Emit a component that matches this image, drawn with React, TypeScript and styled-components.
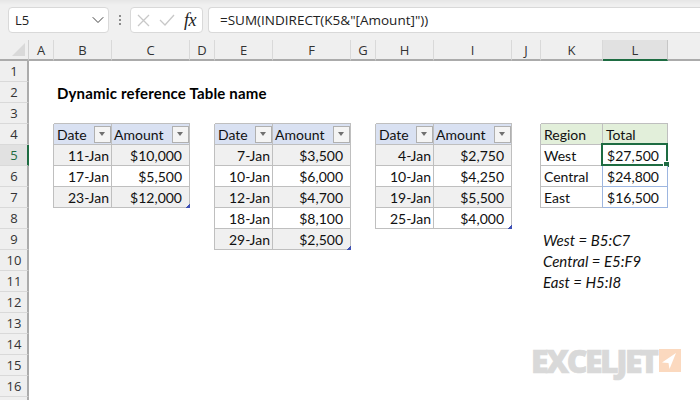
import React from "react";
import styled, { createGlobalStyle } from "styled-components";
import { ChevronDown } from "lucide-react";

const GlobalStyle = createGlobalStyle`
  html, body {
    margin: 0;
    padding: 0;
    background: #fff;
  }
  body {
    width: 700px;
    height: 400px;
    overflow: hidden;
  }
`;

const Page = styled.div`
  width: 700px;
  height: 400px;
  display: flex;
  flex-direction: column;
  overflow: hidden;
  font-family: "Lato", "Liberation Sans", sans-serif;
`;

const Toolbar = styled.div`
  height: 40px;
  box-sizing: border-box;
  flex: none;
  display: flex;
  align-items: center;
  padding: 7px 0 7px 8px;
  background: linear-gradient(#e6e6e6 0, #f0f0f0 5px, #f0f0f0 100%);
  font-family: "Open Sans", "Noto Sans", sans-serif;
`;

const NameBox = styled.div`
  width: 101px;
  height: 26px;
  box-sizing: border-box;
  display: flex;
  align-items: center;
  justify-content: space-between;
  padding: 0 0 0 6px;
  background: #fff;
  border: 1px solid #d9d9d9;
  border-radius: 4px;
  font-size: 13px;
  color: #222;
`;

const Dots = styled.div`
  width: 21px;
  display: flex;
  flex-direction: column;
  align-items: center;
  gap: 2px;

  i {
    width: 2px;
    height: 2px;
    background: #8c8c8c;
  }
`;

const FormulaButtons = styled.div`
  width: 73px;
  height: 26px;
  box-sizing: border-box;
  display: flex;
  align-items: center;
  gap: 9px;
  padding: 0 2px 0 6px;
  background: #fff;
  border: 1px solid #d9d9d9;
  border-radius: 4px;
  margin-right: 5px;

  svg {
    flex: none;
  }
`;

const Fx = styled.span`
  font-family: "Liberation Serif", serif;
  font-style: italic;
  font-size: 18px;
  font-weight: 500;
  color: #222;
  letter-spacing: -0.5px;
`;

const FormulaBar = styled.div`
  flex: 1;
  height: 26px;
  box-sizing: border-box;
  display: flex;
  align-items: center;
  padding: 0 0 0 11px;
  background: #fff;
  border: 1px solid #d9d9d9;
  border-right: none;
  border-radius: 4px 0 0 4px;
  font-size: 13.5px;
  color: #222;
  white-space: nowrap;
`;

const Sheet = styled.div`
  flex: 1;
  display: grid;
  grid-template-columns: 29px 25px 58px 78px 25px 58px 78px 25px 58px 78px 29px 62px 65px 32px;
  grid-template-rows: repeat(18, 21px);
  background: #fff;
`;

const Corner = styled.div`
  grid-column: 1;
  grid-row: 1;
  position: relative;
  background: #efefef;
  border-right: 1px solid #d0d0d0;
  border-bottom: 2px solid #ababab;

  &::after {
    content: "";
    position: absolute;
    right: 3px;
    bottom: 3px;
    border-style: solid;
    border-width: 0 0 13px 13px;
    border-color: transparent transparent #d9d9d9 transparent;
  }
`;

const ColHead = styled.div<{ $col: number; $active?: boolean }>`
  grid-column: ${(p) => p.$col};
  grid-row: 1;
  display: flex;
  align-items: center;
  justify-content: center;
  background: ${(p) => (p.$active ? "#e1e1e1" : "#efefef")};
  border-right: 1px solid ${(p) => (p.$active ? "#c6c6c6" : "#d9d9d9")};
  border-bottom: 2px solid ${(p) => (p.$active ? "#1e6c42" : "#ababab")};
  font-family: "Open Sans", "Noto Sans", sans-serif;
  font-size: 13px;
  color: #333;
`;

const ColFill = styled.div`
  grid-column: 14;
  grid-row: 1;
  background: #efefef;
  border-bottom: 2px solid #ababab;
`;

const RowHead = styled.div<{ $row: number; $active?: boolean }>`
  grid-column: 1;
  grid-row: ${(p) => p.$row};
  box-sizing: border-box;
  display: flex;
  align-items: center;
  justify-content: center;
  padding-left: 1px;
  background: ${(p) => (p.$active ? "#e1e1e1" : "#efefef")};
  border-right: 2px solid ${(p) => (p.$active ? "#1e6c42" : "#ababab")};
  border-bottom: 1px solid #d9d9d9;
  font-family: "Open Sans", "Noto Sans", sans-serif;
  font-size: 13px;
  color: ${(p) => (p.$active ? "#1e6c42" : "#333")};
`;

const Title = styled.div`
  grid-column: 3 / 9;
  grid-row: 3;
  align-self: center;
  padding-left: 3px;
  font-size: 15px;
  font-weight: 700;
  letter-spacing: 0.18px;
  color: #000;
  white-space: nowrap;
`;

type CellKind = "head" | "band" | "plain" | "greenHead";

const cellBackground: Record<CellKind, string> = {
  head: "#d9e1f2",
  band: "#f0f0f0",
  plain: "#fff",
  greenHead: "#e2efda",
};

const Cell = styled.div<{
  $col: number;
  $row: number;
  $kind: CellKind;
  $pad?: number;
  $blue?: boolean;
  $blueRight?: boolean;
}>`
  grid-column: ${(p) => p.$col};
  grid-row: ${(p) => p.$row};
  position: relative;
  box-sizing: border-box;
  display: flex;
  align-items: center;
  justify-content: ${(p) => (p.$pad ? "flex-end" : "flex-start")};
  padding: 0 ${(p) => p.$pad ?? 3}px 0 3px;
  background: ${(p) => cellBackground[p.$kind]};
  border-right: 1px solid ${(p) => (p.$blue || p.$blueRight ? "#9db6e0" : "#bfbfbf")};
  border-bottom: 1px solid ${(p) => (p.$blue ? "#9db6e0" : "#bfbfbf")};
  font-size: 14px;
  color: #111;
  white-space: nowrap;
`;

const AmountLabel = styled.span`
  margin-left: -1px;
`;

const LeftEdge = styled.div<{ $col: number; $from: number; $to: number }>`
  grid-column: ${(p) => p.$col};
  grid-row: ${(p) => p.$from} / ${(p) => p.$to};
  justify-self: end;
  width: 1px;
  background: #bfbfbf;
`;

const TopEdge = styled.div<{ $col: number; $span: number; $row: number }>`
  grid-column: ${(p) => p.$col} / span ${(p) => p.$span};
  grid-row: ${(p) => p.$row};
  align-self: end;
  height: 1px;
  background: #bfbfbf;
`;

const FilterButton = styled.span`
  position: absolute;
  right: 0;
  top: 2px;
  width: 17px;
  height: 17px;
  box-sizing: border-box;
  background: #f4f4f4;
  border: 1px solid #b0b0b0;

  &::after {
    content: "";
    position: absolute;
    left: 4px;
    top: 5px;
    border-style: solid;
    border-width: 4px 3.5px 0 3.5px;
    border-color: #707070 transparent transparent transparent;
  }
`;

const ResizeMark = styled.span`
  position: absolute;
  right: -1px;
  bottom: -1px;
  width: 4px;
  height: 4px;
  background: linear-gradient(135deg, transparent 40%, #3f51b5 40%);
`;

const Selection = styled.div`
  position: absolute;
  inset: -2px -1px -1px -2px;
  border: 2px solid #1e6c42;
  pointer-events: none;

  &::after {
    content: "";
    position: absolute;
    right: -4px;
    bottom: -4px;
    width: 5px;
    height: 5px;
    background: #1e6c42;
    border: 1px solid #fff;
  }
`;

const Note = styled.div<{ $row: number }>`
  grid-column: 12 / 15;
  grid-row: ${(p) => p.$row};
  align-self: center;
  padding-left: 2px;
  font-size: 15px;
  font-style: italic;
  color: #111;
  white-space: nowrap;
`;

const Logo = styled.div`
  position: absolute;
  left: 531px;
  top: 343px;
  display: flex;
  align-items: center;
  gap: 3px;
  pointer-events: none;
`;

const LogoText = styled.span`
  font-family: "Open Sans", "Liberation Sans", sans-serif;
  font-weight: 800;
  font-size: 32px;
  line-height: 35px;
  letter-spacing: -2.5px;
  color: #d9d9d9;
  -webkit-text-stroke: 0.7px #d9d9d9;
`;

const colLetters = ["A", "B", "C", "D", "E", "F", "G", "H", "I", "J", "K", "L"];
const rowNumbers = Array.from({ length: 17 }, (_, i) => i + 1);

const tables = [
  {
    col: 3,
    rows: [
      ["11-Jan", "$10,000"],
      ["17-Jan", "$5,500"],
      ["23-Jan", "$12,000"],
    ],
  },
  {
    col: 6,
    rows: [
      ["7-Jan", "$3,500"],
      ["10-Jan", "$6,000"],
      ["12-Jan", "$4,700"],
      ["18-Jan", "$8,100"],
      ["29-Jan", "$2,500"],
    ],
  },
  {
    col: 9,
    rows: [
      ["4-Jan", "$2,750"],
      ["10-Jan", "$4,250"],
      ["19-Jan", "$5,500"],
      ["25-Jan", "$4,000"],
    ],
  },
];

const summary = [
  ["West", "$27,500"],
  ["Central", "$24,800"],
  ["East", "$16,500"],
];

function SourceTable({ col, rows }: { col: number; rows: string[][] }) {
  return (
    <>
      <TopEdge $col={col} $span={2} $row={4} />
      <LeftEdge $col={col - 1} $from={5} $to={6 + rows.length} />
      <Cell $col={col} $row={5} $kind="head">
        Date
        <FilterButton />
      </Cell>
      <Cell $col={col + 1} $row={5} $kind="head">
        <AmountLabel>Amount</AmountLabel>
        <FilterButton />
      </Cell>
      {rows.map((row, i) => (
        <React.Fragment key={row[0]}>
          <Cell $col={col} $row={6 + i} $kind={i % 2 ? "plain" : "band"} $pad={2}>
            {row[0]}
          </Cell>
          <Cell $col={col + 1} $row={6 + i} $kind={i % 2 ? "plain" : "band"} $pad={7}>
            {row[1]}
            {i === rows.length - 1 && <ResizeMark />}
          </Cell>
        </React.Fragment>
      ))}
    </>
  );
}

export default function App() {
  return (
    <Page>
      <GlobalStyle />
      <Toolbar>
        <NameBox>
          L5
          <ChevronDown size={20} color="#444" strokeWidth={1.2} />
        </NameBox>
        <Dots>
          <i />
          <i />
          <i />
        </Dots>
        <FormulaButtons>
          <svg width="13" height="13" viewBox="0 0 13 13" fill="none" stroke="#c8c8c8" strokeWidth="1.3">
            <path d="M1 1l11 11M12 1L1 12" />
          </svg>
          <svg width="16" height="12" viewBox="0 0 16 12" fill="none" stroke="#c8c8c8" strokeWidth="1.3">
            <path d="M1 6l5 5L15 1" />
          </svg>
          <Fx>fx</Fx>
        </FormulaButtons>
        <FormulaBar>=SUM(INDIRECT(K5&amp;"[Amount]"))</FormulaBar>
      </Toolbar>

      <Sheet>
        <Corner />
        {colLetters.map((letter, i) => (
          <ColHead key={letter} $col={i + 2} $active={letter === "L"}>
            {letter}
          </ColHead>
        ))}
        <ColFill />
        {rowNumbers.map((n) => (
          <RowHead key={n} $row={n + 1} $active={n === 5}>
            {n < 17 ? n : ""}
          </RowHead>
        ))}

        <Title>Dynamic reference Table name</Title>

        {tables.map((t) => (
          <SourceTable key={t.col} col={t.col} rows={t.rows} />
        ))}

        <TopEdge $col={12} $span={2} $row={4} />
        <LeftEdge $col={11} $from={5} $to={9} />
        <Cell $col={12} $row={5} $kind="greenHead">
          Region
        </Cell>
        <Cell $col={13} $row={5} $kind="greenHead">
          Total
        </Cell>
        {summary.map((row, i) => (
          <React.Fragment key={row[0]}>
            <Cell $col={12} $row={6 + i} $kind="plain" $blueRight={i > 0}>
              {row[0]}
            </Cell>
            <Cell $col={13} $row={6 + i} $kind="plain" $pad={8} $blue>
              {row[1]}
              {i === 0 && <Selection />}
            </Cell>
          </React.Fragment>
        ))}

        <Note $row={10}>West = B5:C7</Note>
        <Note $row={11}>Central = E5:F9</Note>
        <Note $row={12}>East = H5:I8</Note>
      </Sheet>

      <Logo>
        <LogoText>EXCELJET</LogoText>
        <svg width="22" height="23" viewBox="0 0 22 23">
          <rect width="22" height="23" fill="#fbd9bf" />
          <path d="M3 13.5L17 4L10.5 20L9.5 14Z" fill="#fff" />
        </svg>
      </Logo>
    </Page>
  );
}
